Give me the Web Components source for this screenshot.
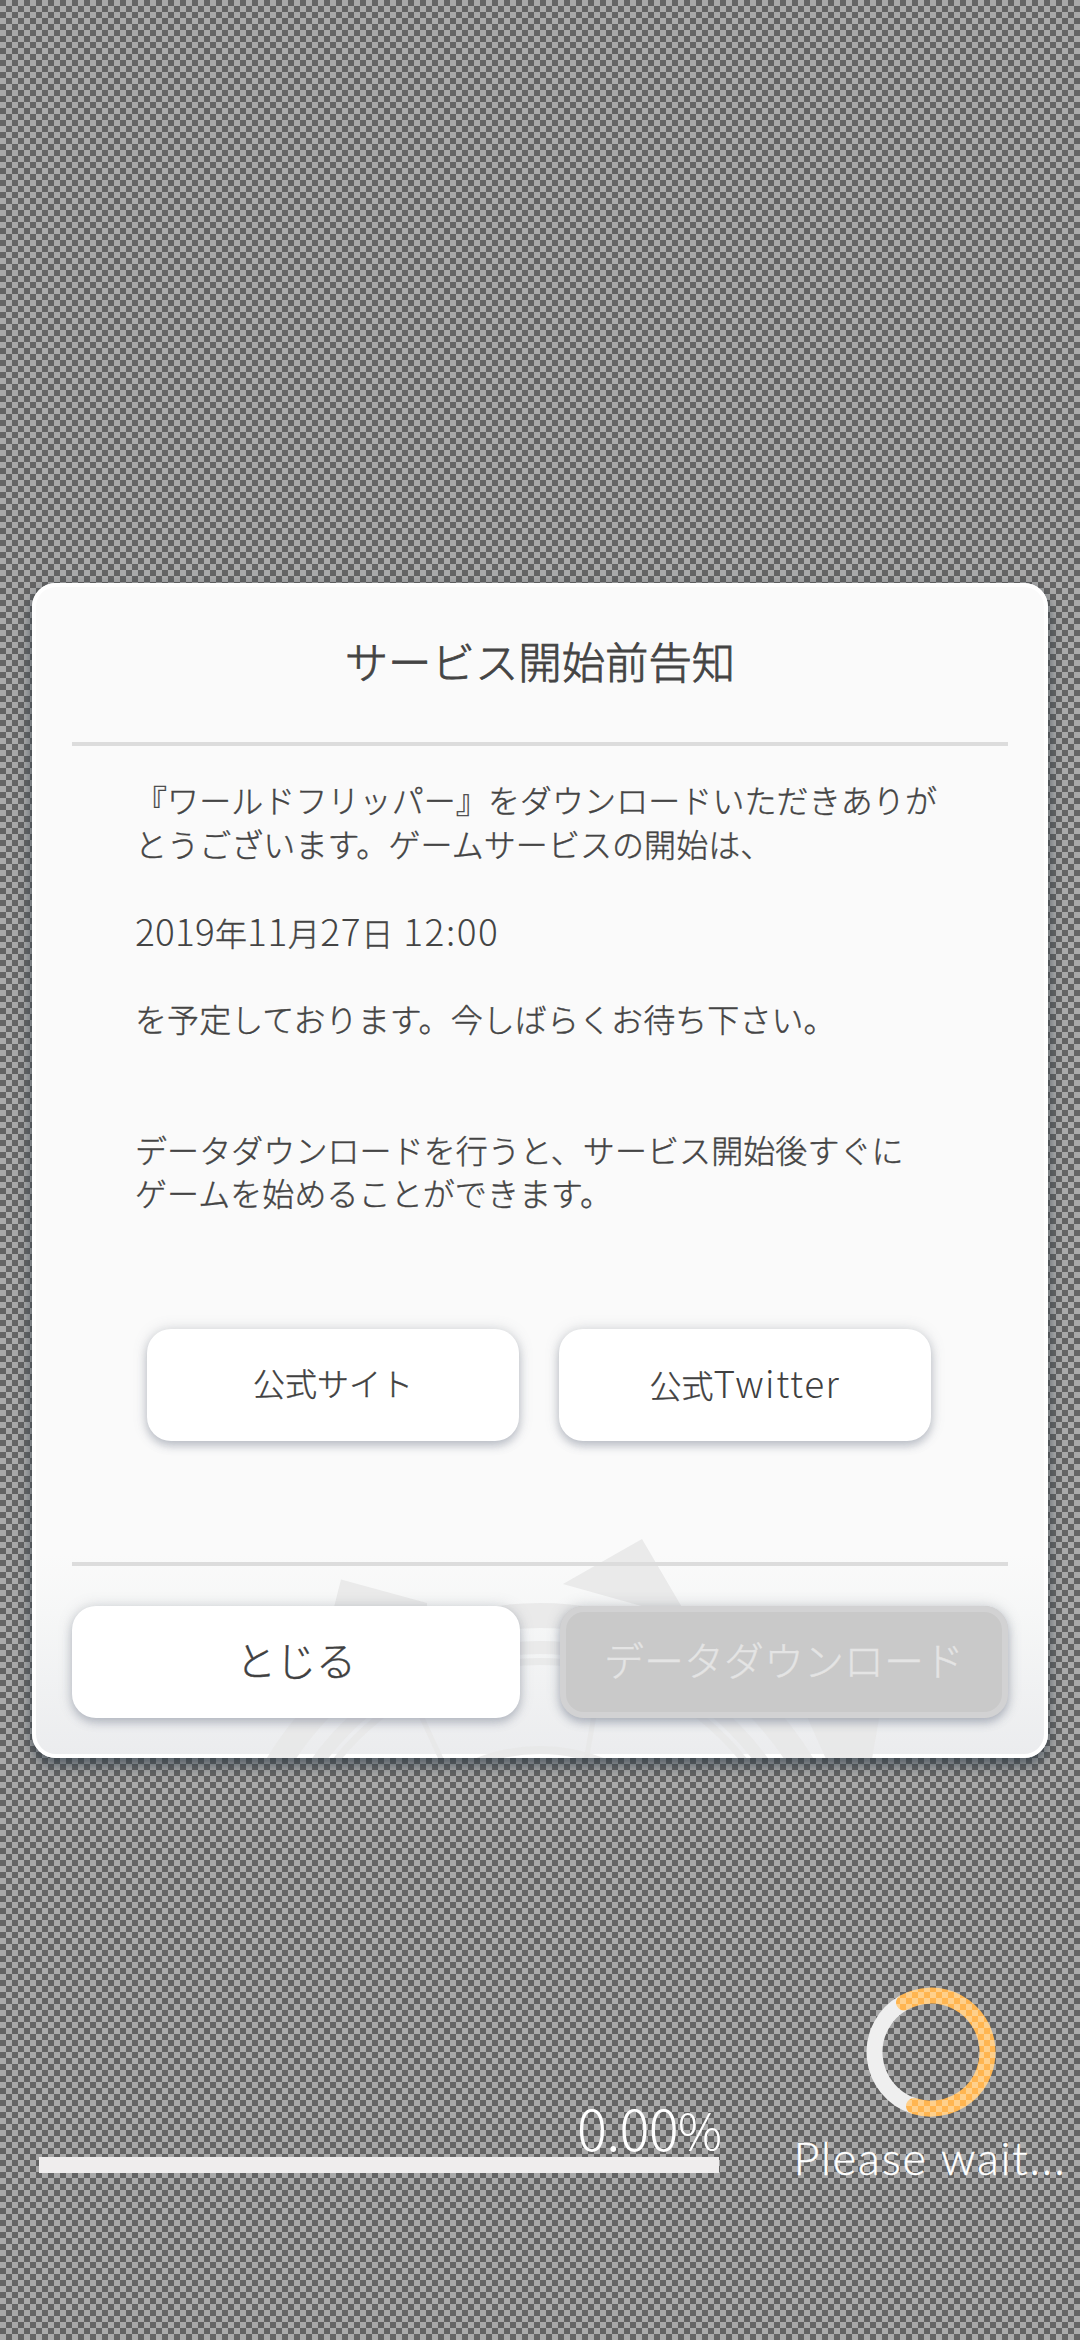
<!DOCTYPE html>
<html lang="ja">
<head>
<meta charset="utf-8">
<title>サービス開始前告知</title>
<style>
html,body{margin:0;padding:0}
body{width:1080px;height:2340px;overflow:hidden;font-family:"Noto Sans CJK JP",sans-serif;font-weight:300;color:#444}
</style>
</head>
<body>
<app-stage>
  <notice-dialog>
    <span slot="title">サービス開始前告知</span>
    <notice-line>『ワールドフリッパー』をダウンロードいただきありが</notice-line>
    <notice-line>とうございます。ゲームサービスの開始は、</notice-line>
    <notice-line></notice-line>
    <notice-line><fit-text width="80" size="37">2019</fit-text>年<fit-text width="41" size="37">11</fit-text>月<fit-text width="41" size="37">27</fit-text>日<fit-text width="96" size="37" style="margin-left:10px">12:00</fit-text></notice-line>
    <notice-line></notice-line>
    <notice-line>を予定しております。今しばらくお待ち下さい。</notice-line>
    <notice-line></notice-line>
    <notice-line></notice-line>
    <notice-line>データダウンロードを行うと、サービス開始後すぐに</notice-line>
    <notice-line>ゲームを始めることができます。</notice-line>
    <game-button slot="links" style="--fs:32px">公式サイト</game-button>
    <game-button slot="links" style="--fs:32px">公式<fit-text width="127" size="37">Twitter</fit-text></game-button>
    <game-button slot="actions">とじる</game-button>
    <game-button slot="actions" disabled>データダウンロード</game-button>
  </notice-dialog>
  <loading-footer></loading-footer>
</app-stage>
<script>
const mount=(el,html)=>{el.attachShadow({mode:'open'}).innerHTML=html};

customElements.define('fit-text',class extends HTMLElement{
  connectedCallback(){
    const size=this.getAttribute('size'),target=+this.getAttribute('width');
    mount(this,`<style>:host{display:inline-block;white-space:nowrap;line-height:1;font-size:${size}px;-webkit-text-stroke:var(--latin-stroke,0)}</style><slot></slot>`);
    const natural=this.getBoundingClientRect().width;
    this.style.letterSpacing=((target-natural)/this.textContent.length)+'px';
  }
});

customElements.define('notice-line',class extends HTMLElement{
  constructor(){super();mount(this,`<style>:host{display:flex;align-items:center;height:43.67px;font-size:32px;line-height:1;letter-spacing:.08px;white-space:nowrap;-webkit-text-stroke:.4px}</style><span><slot></slot></span>`)}
});

customElements.define('game-button',class extends HTMLElement{
  constructor(){super();mount(this,`<style>
:host{display:flex;flex:1 1 0;min-width:0;align-items:center;justify-content:center;height:112px;box-sizing:border-box;border-radius:24px;background:#fff;color:#404040;font-size:var(--fs,40px);line-height:1;white-space:nowrap;padding-bottom:6px;-webkit-text-stroke:.4px;box-shadow:0 0 14px rgba(110,115,125,.26),0 5px 9px rgba(120,128,150,.38)}
:host([disabled]){background:#c9c9c9;color:#e4e4e4;box-shadow:inset 0 0 0 6px #d2d2d3,0 0 14px rgba(110,115,125,.3),0 5px 9px rgba(120,128,150,.42)}
</style><span><slot></slot></span>`)}
});

customElements.define('crest-mark',class extends HTMLElement{
  constructor(){super();mount(this,`<style>:host{display:block;overflow:hidden}svg{display:block}</style>
<svg width="1016" height="1176" viewBox="32 582 1016 1176">
<g fill="none" stroke="#e8e8e8" stroke-opacity=".85">
<circle cx="540" cy="1920" r="305.5" stroke-width="25"/>
<circle cx="540" cy="1920" r="273.5" stroke-width="13"/>
<circle cx="540" cy="1920" r="259.5" stroke-width="7"/>
<circle cx="540" cy="1920" r="171" stroke-width="8"/>
<path d="M405 1680L442 1760M600 1680L586 1760" stroke-width="5"/>
</g>
<g fill="#e8e8e8" fill-opacity=".9">
<path d="M341 1578.5L427 1602V1618H331z"/>
<path d="M642 1538L563 1583L645 1606L690 1620z"/>
<path d="M800 1700L882 1700L872 1758H826z"/>
</g></svg>`)}
});

customElements.define('notice-dialog',class extends HTMLElement{
  constructor(){super();mount(this,`<style>
:host{display:flex;flex-direction:column;position:relative;width:1016px;height:1175px;margin:0 auto;box-sizing:border-box;padding:0 40px;border-radius:24px;
background:linear-gradient(#fafafa 0,#fafafa 970px,#f6f7f7 1030px,#ebecee 1175px);
box-shadow:inset 0 0 0 4px #fff,0 2px 8px rgba(45,58,70,.4),0 9px 14px rgba(45,60,70,.5)}
crest-mark{position:absolute;inset:0;border-radius:24px}
header,.text,.links,.actions,hr{position:relative}
header{display:flex;align-items:center;justify-content:center;height:159px;box-sizing:border-box;padding-bottom:3px;font-size:43.4px;line-height:1;-webkit-text-stroke:.8px}
hr{width:100%;height:4px;margin:0;border:0;background:#dcdcdc;flex:none}
.text{height:550px;box-sizing:content-box;padding:31.5px 0 0 63px;margin-bottom:1.5px}
.links{display:flex;gap:40px;margin:0 77px 0 75px;height:233px}
.actions{display:flex;gap:40px;padding-top:40px}
</style>
<crest-mark></crest-mark>
<header><slot name="title"></slot></header><hr>
<div class="text"><slot></slot></div>
<div class="links"><slot name="links"></slot></div><hr>
<div class="actions"><slot name="actions"></slot></div>`)}
});

customElements.define('loading-footer',class extends HTMLElement{
  constructor(){super();mount(this,`<style>
:host{display:flex;height:582px;color:#fff;line-height:1}
.progress{width:680px;margin-left:39px;padding-top:343px;display:flex;flex-direction:column;align-items:flex-end}
.value{height:56px;padding-bottom:4px;box-sizing:border-box;display:flex;align-items:center;white-space:nowrap;margin-right:1px}
.bar{width:680px;height:16px;background:#efeded}
.wait{display:flex;flex-direction:column;align-items:center;width:274px;margin-left:74px;padding-top:229px}
svg{display:block}
.label{margin-top:17px;height:50px;white-space:nowrap;--latin-stroke:.4px}
</style>
<div class="progress"><div class="value"><fit-text width="101" size="56">0.00</fit-text><fit-text width="40" size="49" style="padding-top:3px">%</fit-text></div><div class="bar"></div></div>
<div class="wait">
<svg width="132" height="132" viewBox="864 1987 132 132">
<defs><pattern id="check" width="12" height="12" patternUnits="userSpaceOnUse"><path d="M0 0h12v12H0z" fill="#ffb550"/><path d="M6 0h6v6H6zM0 6h6v6H0z" fill="#ffd08b"/></pattern></defs>
<path d="M904 2002.5A56.5 56.5 0 0 0 914 2106" fill="none" stroke="#efefef" stroke-width="16"/>
<path d="M904 2002.5A56.5 56.5 0 1 1 914 2106" fill="none" stroke="url(#check)" stroke-width="16" stroke-linecap="round"/>
</svg>
<div class="label"><fit-text width="273" size="45" style="font-family:Lato,sans-serif">Please wait...</fit-text></div>
</div>`)}
});

customElements.define('app-stage',class extends HTMLElement{
  constructor(){super();mount(this,`<style>
:host{display:flex;flex-direction:column;box-sizing:border-box;width:1080px;height:2340px;padding-top:583px;overflow:hidden;
background:repeating-conic-gradient(#a9a9a9 0 25%,#646464 0 50%) 0 0/12px 12px}
</style><slot></slot>`)}
});
</script>
</body>
</html>
